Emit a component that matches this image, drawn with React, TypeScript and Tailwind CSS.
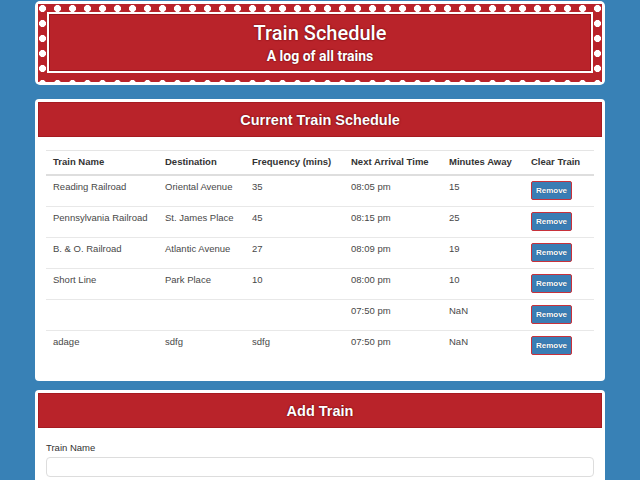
import React from 'react';

type Train = {
  name: string;
  destination: string;
  frequency: string;
  arrival: string;
  away: string;
};

const trains: Train[] = [
  { name: 'Reading Railroad', destination: 'Oriental Avenue', frequency: '35', arrival: '08:05 pm', away: '15' },
  { name: 'Pennsylvania Railroad', destination: 'St. James Place', frequency: '45', arrival: '08:15 pm', away: '25' },
  { name: 'B. & O. Railroad', destination: 'Atlantic Avenue', frequency: '27', arrival: '08:09 pm', away: '19' },
  { name: 'Short Line', destination: 'Park Place', frequency: '10', arrival: '08:00 pm', away: '10' },
  { name: '', destination: '', frequency: '', arrival: '07:50 pm', away: 'NaN' },
  { name: 'adage', destination: 'sdfg', frequency: 'sdfg', arrival: '07:50 pm', away: 'NaN' },
];

const outline = '[text-shadow:0_0_2px_#6e0b10,0_0_1px_#6e0b10]';
const th = 'h-[26px] border-t border-b-2 border-t-[#e5e5e5] border-b-[#dedede] pl-[7px] pt-[5px] pb-[6px] align-top font-bold';

function PanelHeading({ children }: { children: React.ReactNode }) {
  return (
    <div className="mx-[3px] pt-[3px]">
      <div className="flex h-[35px] items-center justify-center border border-[#a51b21] bg-[#b9232a]">
        <h2 className={`text-[14.5px] font-bold leading-[18px] text-white ${outline}`}>{children}</h2>
      </div>
    </div>
  );
}

export default function App() {
  return (
    <div className="min-h-[480px] bg-[#3881b6] pt-px font-['Liberation_Sans',Arial,sans-serif] text-[#333]">
      <div className="mx-auto w-[570px]">
        {/* stamp header */}
        <div className="rounded-[5px] bg-white p-[3px]">
          <div className="bg-[#b9232a] bg-[radial-gradient(circle,#fff_3.2px,transparent_3.8px)] bg-[length:15px_15px] bg-[position:-3px_-3px] px-[9px] pt-[8px] pb-[9px]">
            <div className="flex h-[61px] flex-col items-center justify-center border-2 border-white bg-[#b9232a] shadow-[inset_0_0_0_1px_#9a161c]">
              <h1 className={`font-['Roboto',sans-serif] text-[20px] font-medium leading-[24px] text-white ${outline}`}>Train Schedule</h1>
              <p className={`mt-[3px] font-['Roboto',sans-serif] text-[14px] font-bold leading-[17px] text-white ${outline}`}>A log of all trains</p>
            </div>
          </div>
        </div>

        {/* schedule */}
        <div className="mt-[14px] rounded-[4px] bg-white pb-[19px]">
          <PanelHeading>Current Train Schedule</PanelHeading>
          <div className="px-[11px] pt-[13px]">
            <table className="w-full border-separate border-spacing-0 text-left text-[9.5px] leading-[12px]">
              <thead>
                <tr>
                  <th className={`w-[112px] ${th}`}>Train Name</th>
                  <th className={`w-[87px] ${th}`}>Destination</th>
                  <th className={`w-[99px] ${th}`}>Frequency (mins)</th>
                  <th className={`w-[98px] ${th}`}>Next Arrival Time</th>
                  <th className={`w-[82px] ${th}`}>Minutes Away</th>
                  <th className={th}>Clear Train</th>
                </tr>
              </thead>
              <tbody>
                {trains.map((t, i) => {
                  const td = `h-[31px] pl-[7px] pt-[5px] align-top ${i < trains.length - 1 ? 'border-b border-[#e8e8e8]' : ''}`;
                  return (
                    <tr key={i}>
                      <td className={`${td} text-[#484848]`}>{t.name}</td>
                      <td className={`${td} text-[#484848]`}>{t.destination}</td>
                      <td className={`${td} text-[#484848]`}>{t.frequency}</td>
                      <td className={`${td} text-[#484848]`}>{t.arrival}</td>
                      <td className={`${td} text-[#484848]`}>{t.away}</td>
                      <td className={td}>
                        <button className="flex h-[19px] w-[41px] items-center justify-center rounded-[2px] border border-[#c8313a] bg-[#3a7db4] text-[8px] font-bold leading-[10px] text-white [text-shadow:0_0_1px_#1d4a70]">
                          Remove
                        </button>
                      </td>
                    </tr>
                  );
                })}
              </tbody>
            </table>
          </div>
        </div>

        {/* add train */}
        <div className="mt-[9px] rounded-[4px] bg-white pb-[20px]">
          <PanelHeading>Add Train</PanelHeading>
          <div className="px-[11px] pt-[14px]">
            <label className="block text-[9.5px] leading-[12px] text-[#333]">Train Name</label>
            <input className="mt-[3px] h-[20px] w-full rounded-[4px] border border-[#ddd] bg-white" />
          </div>
        </div>
      </div>
    </div>
  );
}
